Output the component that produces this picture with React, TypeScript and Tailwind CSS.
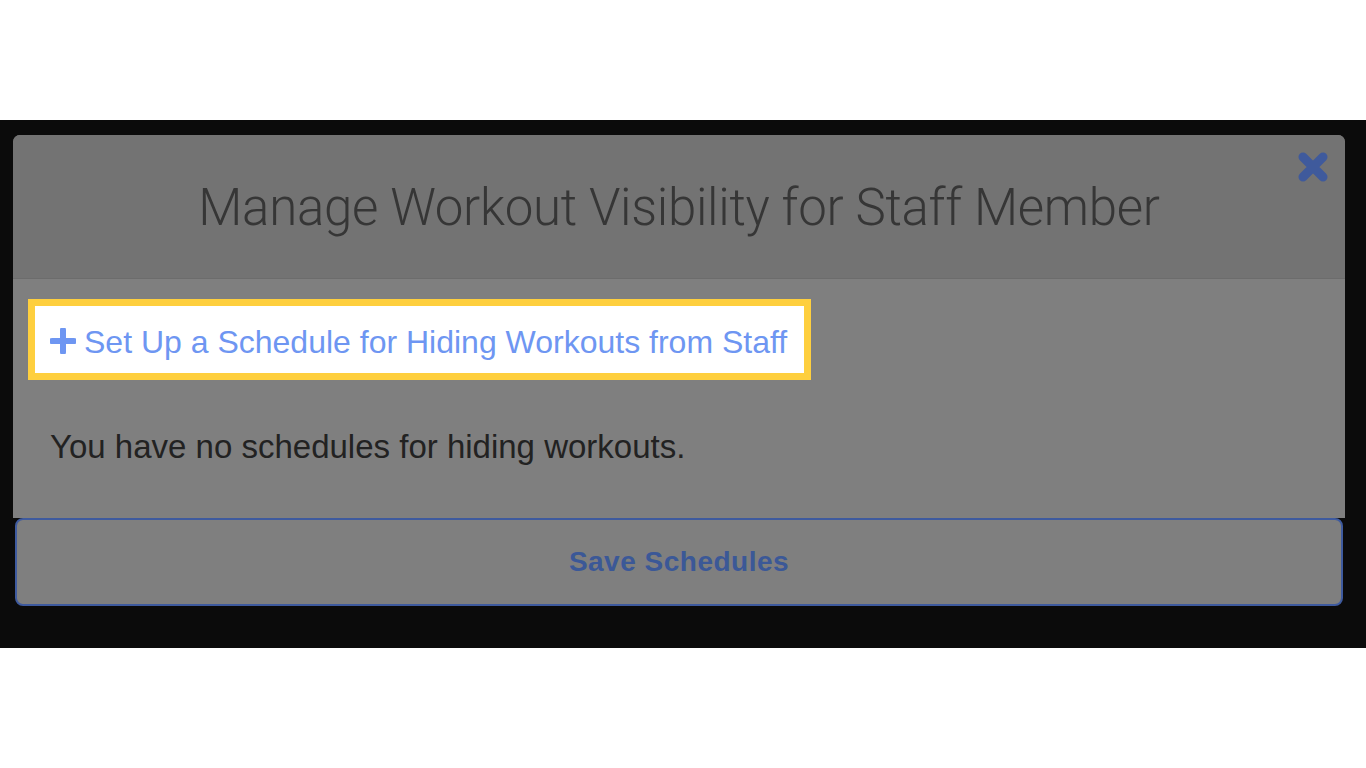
import React from "react";

export default function App() {
  return (
    <div className="w-[1366px] h-[768px] bg-white flex flex-col overflow-hidden" style={{ fontFamily: '"Liberation Sans", Arial, sans-serif' }}>
      <div className="h-[120px] bg-white shrink-0" />
      <div className="h-[528px] bg-[#0b0b0b] shrink-0 px-[13px] pt-[15px] pr-[21px]">
        <div className="rounded-t-[7px] bg-[#7f7f7f] flex flex-col h-[383px]">
          <div className="h-[144px] bg-[#737373] rounded-t-[7px] border-b border-[#6c6c6c] relative flex items-center justify-center">
            <h1 className="text-[51px] font-light text-[#363636] tracking-[-0.3px] leading-none pt-[2px]" style={{ fontFamily: 'Roboto, "Liberation Sans", sans-serif' }}>
              Manage Workout Visibility for Staff Member
            </h1>
            <svg className="absolute right-[16px] top-[16px]" width="32" height="32" viewBox="0 0 32 32">
              <path d="M6 6 L26 26 M26 6 L6 26" stroke="#3f5a9c" strokeWidth="9" strokeLinecap="round" />
            </svg>
          </div>
          <div className="pt-[20px] px-[15px]">
            <div className="w-[783px] h-[81px] border-[7px] border-[#fecf3e] bg-white flex items-center pl-[15px]">
              <svg width="26" height="26" viewBox="0 0 26 26" className="mr-[8px] mt-[2px]">
                <path d="M13 2 V24 M2 13 H24" stroke="#6e96f2" strokeWidth="6" strokeLinecap="round" />
              </svg>
              <span className="text-[32px] text-[#6e96f2] leading-none pt-[4px]">Set Up a Schedule for Hiding Workouts from Staff</span>
            </div>
            <p className="mt-[50px] h-[33px] text-[33px] text-[#222222] leading-none pl-[22px]">You have no schedules for hiding workouts.</p>
          </div>
        </div>
        <button className="mx-[2px] w-[1328px] h-[88px] border-2 border-[#3e5a9e] rounded-[8px] bg-[#7f7f7f] flex items-center justify-center text-[28px] font-bold tracking-[0.5px] text-[#3b5897]">
          Save Schedules
        </button>
      </div>
      <div className="flex-1 bg-white" />
    </div>
  );
}
